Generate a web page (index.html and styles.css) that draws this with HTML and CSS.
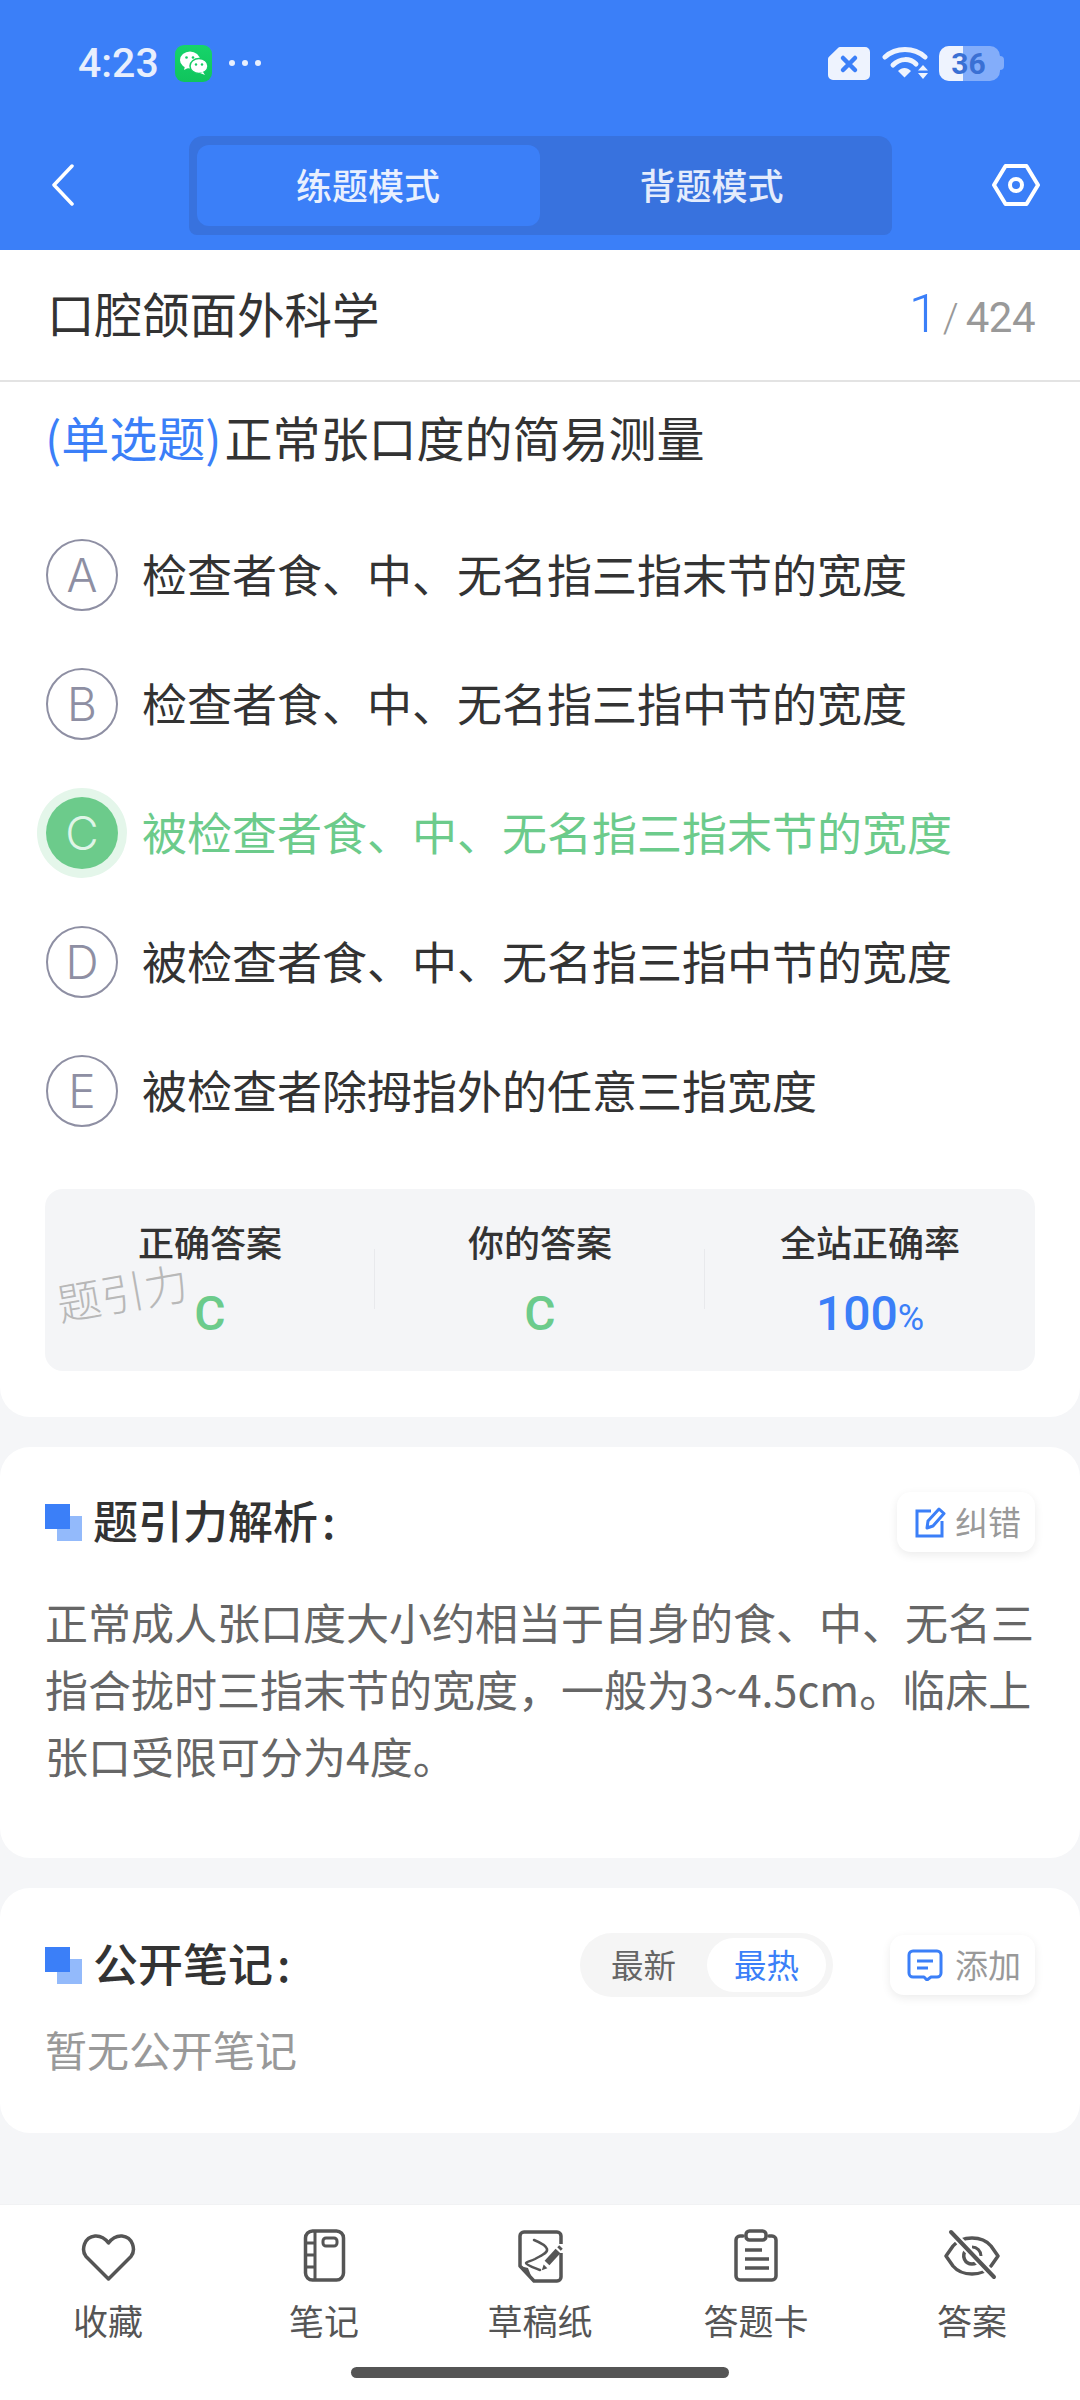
FILE: index.html
```html
<!DOCTYPE html>
<html lang="zh">
<head>
<meta charset="utf-8">
<title>练题模式</title>
<link rel="stylesheet" href="styles.css">
</head>
<body>
<div class="page">
  <header class="header">
    <div class="status">
      <div class="status-left">
        <span class="time">4:23</span>
        <svg class="wechat" viewBox="0 0 37 37"><defs><linearGradient id="wg" x1="0" y1="0" x2="0" y2="1"><stop offset="0" stop-color="#16d46a"/><stop offset="1" stop-color="#10c45c"/></linearGradient></defs><rect width="37" height="37" rx="9" fill="url(#wg)"/><ellipse cx="15" cy="15" rx="10" ry="8.6" fill="#fff"/><path d="M10 21l-1 4 5-2.500z" fill="#fff"/><ellipse cx="24" cy="21" rx="9" ry="7.400" fill="#fff" stroke="#14cc64" stroke-width="1.500"/><path d="M28 27l2 3-5-2z" fill="#fff"/><circle cx="11.500" cy="12.500" r="1.300" fill="#14cc64"/><circle cx="18" cy="12.500" r="1.300" fill="#14cc64"/><circle cx="21" cy="19.500" r="1.200" fill="#14cc64"/><circle cx="27" cy="19.500" r="1.200" fill="#14cc64"/></svg>
        <svg class="dots" viewBox="0 0 34 8"><circle cx="4" cy="4" r="3" fill="#e8effd"/><circle cx="17" cy="4" r="3" fill="#e8effd"/><circle cx="30" cy="4" r="3" fill="#e8effd"/></svg>
      </div>
      <div class="status-right">
        <svg class="sim" viewBox="0 0 44 35"><path d="M13 1H38a5 5 0 0 1 5 5V29a5 5 0 0 1-5 5H6a5 5 0 0 1-5-5V13a3 3 0 0 1 1-2.200L11 2a3 3 0 0 1 2-1z" fill="#eef3fe"/><path d="M16 12l12 12M28 12L16 24" stroke="#3b7ff8" stroke-width="4.500" stroke-linecap="round"/></svg>
        <svg class="wifi" viewBox="0 0 46 34"><path d="M3 11C14 1 32 1 43 11" fill="none" stroke="#eef3fe" stroke-width="5" stroke-linecap="round"/><path d="M11 19C18 12 28 12 34 18" fill="none" stroke="#eef3fe" stroke-width="5" stroke-linecap="round"/><path d="M16 25c4-4 9-4 13 0l-6.500 6.500z" fill="#eef3fe"/><path d="M42 19l5 5.500H37zM37 27h10l-5 6z" fill="#eef3fe" transform="translate(-1 0)"/></svg>
        <div class="battery">
          <div class="batt-body">
            <span class="batt-fill"></span>
            <span class="batt-num">36</span>
          </div>
          <span class="batt-nub"></span>
        </div>
      </div>
    </div>
    <nav class="nav">
      <svg class="back" viewBox="0 0 24 42"><path d="M21 2L3 21l18 19" fill="none" stroke="#fff" stroke-width="3.500" stroke-linecap="round" stroke-linejoin="round"/></svg>
      <div class="tabs">
        <div class="tab tab-on">练题模式</div>
        <div class="tab">背题模式</div>
      </div>
      <svg class="hex" viewBox="0 0 48 44"><path d="M13.500 3h21L46 22 34.500 41h-21L2 22z" fill="none" stroke="#fff" stroke-width="4" stroke-linejoin="round"/><circle cx="24" cy="22" r="6" fill="none" stroke="#fff" stroke-width="4"/></svg>
    </nav>
  </header>

  <main class="main">
    <section class="card card-q">
      <div class="titlebar">
        <h1 class="subject">口腔颌面外科学</h1>
        <div class="count"><span class="count-cur">1</span><span class="count-sep">/</span><span class="count-all">424</span></div>
      </div>
      <p class="question"><span class="qtype">(单选题)</span><span class="qtext">正常张口度的简易测量</span></p>
      <ul class="options">
        <li class="option"><span class="letter">A</span><span class="opt-text">检查者食、中、无名指三指末节的宽度</span></li>
        <li class="option"><span class="letter">B</span><span class="opt-text">检查者食、中、无名指三指中节的宽度</span></li>
        <li class="option option-right"><span class="letter">C</span><span class="opt-text">被检查者食、中、无名指三指末节的宽度</span></li>
        <li class="option"><span class="letter">D</span><span class="opt-text">被检查者食、中、无名指三指中节的宽度</span></li>
        <li class="option"><span class="letter">E</span><span class="opt-text">被检查者除拇指外的任意三指宽度</span></li>
      </ul>
      <div class="result">
        <div class="res-col"><div class="res-label">正确答案</div><div class="res-val green">C</div></div>
        <div class="res-col res-mid"><div class="res-label">你的答案</div><div class="res-val green">C</div></div>
        <div class="res-col"><div class="res-label">全站正确率</div><div class="res-val blue">100<small>%</small></div></div>
        <span class="watermark">题引力</span>
      </div>
    </section>

    <section class="card card-a">
      <div class="sec-head">
        <h2 class="sec-title"><span class="sec-mark"></span><span class="sec-text">题引力解析<span class="colon">:</span></span></h2>
        <div class="chip chip-fix">
          <svg class="chip-icon" viewBox="0 0 32 32"><path d="M17 5H3v25h25V15" fill="none" stroke="#3b7ff8" stroke-width="3"/><path d="M13 22l1-7L25 3l5 4.500L19 20z" fill="none" stroke="#3b7ff8" stroke-width="3" stroke-linejoin="round"/></svg>
          <span class="chip-text">纠错</span>
        </div>
      </div>
      <p class="explain">正常成人张口度大小约相当于自身的食、中、无名三指合拢时三指末节的宽度，一般为3~4.5cm。临床上张口受限可分为4度。</p>
    </section>

    <section class="card card-n">
      <div class="sec-head">
        <h2 class="sec-title"><span class="sec-mark"></span><span class="sec-text">公开笔记<span class="colon">:</span></span></h2>
        <div class="sec-tools">
          <div class="sort"><span class="sort-item">最新</span><span class="sort-item sort-on">最热</span></div>
          <div class="chip chip-add">
            <svg class="chip-icon" viewBox="0 0 36 32"><path d="M6 2h24a4 4 0 0 1 4 4v18a4 4 0 0 1-4 4h-6l-4 3-3-3H6a4 4 0 0 1-4-4V6a4 4 0 0 1 4-4z" fill="none" stroke="#3b7ff8" stroke-width="3" stroke-linejoin="round"/><path d="M10 12h16M10 19h11" stroke="#3b7ff8" stroke-width="3"/></svg>
            <span class="chip-text">添加</span>
          </div>
        </div>
      </div>
      <p class="empty">暂无公开笔记</p>
    </section>
  </main>

  <footer class="bottom">
    <div class="tools">
      <div class="tool">
        <svg class="tool-icon" viewBox="0 0 56 56"><path d="M28.500 51L6 28.500C1 22 4 9 15 8c6.500-.5 10.500 3 13.500 7 3-4 7-7.500 13.500-7 11 1 14 14 9 20.500z" fill="none" stroke="#555" stroke-width="3.500" stroke-linejoin="round"/></svg>
        <span>收藏</span>
      </div>
      <div class="tool">
        <svg class="tool-icon" viewBox="0 0 56 56"><rect x="9.500" y="3" width="38" height="49" rx="7" fill="none" stroke="#555" stroke-width="3.500"/><path d="M19 3v49M10 15h9M10 27h9M10 39h9" stroke="#555" stroke-width="3" fill="none"/><rect x="27" y="10" width="14" height="8" rx="3" fill="none" stroke="#555" stroke-width="3"/></svg>
        <span>笔记</span>
      </div>
      <div class="tool">
        <svg class="tool-icon" viewBox="0 0 56 56"><path d="M49 16V8a4 4 0 0 0-4-4H12a4 4 0 0 0-4 4v30l14 15h23a4 4 0 0 0 4-4V25" fill="none" stroke="#555" stroke-width="3.500" stroke-linejoin="round"/><path d="M8 38l8 2 5 13z" fill="#555"/><path d="M22 12c5 2 12 6 13 9 1 4-5 6-12 10-4 2-9 3-9 4 0 2 9 5 14 7" fill="none" stroke="#555" stroke-width="2.500" stroke-linecap="round"/><path d="M35 35l11-12" stroke="#555" stroke-width="6.500"/><path d="M31 41l1-3 2 2z" fill="#555" stroke="#555" stroke-width="1.500"/><path d="M47 21l2-2" stroke="#555" stroke-width="5"/></svg>
        <span>草稿纸</span>
      </div>
      <div class="tool">
        <svg class="tool-icon" viewBox="0 0 56 56"><path d="M15 8h-3a4 4 0 0 0-4 4v36a4 4 0 0 0 4 4h32a4 4 0 0 0 4-4V12a4 4 0 0 0-4-4h-3" fill="none" stroke="#555" stroke-width="3.500" stroke-linecap="round"/><rect x="18" y="3" width="20" height="9" rx="3.500" fill="none" stroke="#555" stroke-width="3.500"/><path d="M17 22h17M17 31h24M17 40h24" stroke="#555" stroke-width="3.500"/></svg>
        <span>答题卡</span>
      </div>
      <div class="tool">
        <svg class="tool-icon" viewBox="0 0 56 56"><path d="M2 28L9 18c5-6 12-8 19-8s14 2 19 8l7 10-7 10c-5 6-12 8-19 8s-14-2-19-8z" fill="none" stroke="#555" stroke-width="3.500" stroke-linejoin="round"/><path d="M22 22c-5 6-1 14 6 14 3 0 5-1 6-3" fill="none" stroke="#555" stroke-width="3.500"/><path d="M28 19c5 0 9 4 9 9" fill="none" stroke="#555" stroke-width="3"/><path d="M9 6l41 43" stroke="#fff" stroke-width="8"/><path d="M7 4l43 45" stroke="#555" stroke-width="4" stroke-linecap="round"/></svg>
        <span>答案</span>
      </div>
    </div>
    <div class="home-wrap"><span class="home-bar"></span></div>
  </footer>
</div>
</body>
</html>
```

FILE: styles.css
```css
* { box-sizing: border-box; }
html, body { margin: 0; padding: 0; }
body {
  width: 1080px;
  height: 2400px;
  overflow: hidden;
  font-family: "Noto Sans CJK SC", "Noto Sans", sans-serif;
  color: #333;
  background: #f5f6f8;
}
h1, h2, p, ul { margin: 0; padding: 0; font-weight: 400; }
ul { list-style: none; }

.page { display: flex; flex-direction: column; height: 2400px; }

/* header */
.header { height: 250px; background: #3b7ff8; flex: none; }
.status {
  height: 136px;
  padding: 45px 76px 0 78px;
  display: flex;
  justify-content: space-between;
  align-items: flex-start;
}
.status-left { display: flex; align-items: center; gap: 16px; height: 36px; }
.status-right { display: flex; align-items: center; gap: 11px; height: 36px; }
.time {
  font-family: Roboto, sans-serif;
  font-size: 41px;
  font-weight: 500;
  line-height: 36px;
  color: #e8effd;
}
.wechat { width: 37px; height: 37px; display: block; }
.dots { width: 34px; height: 8px; display: block; }
.sim { width: 44px; height: 35px; display: block; }
.wifi { width: 46px; height: 34px; display: block; }
.battery { display: flex; align-items: center; }
.batt-body {
  position: relative;
  width: 61px;
  height: 35px;
  border-radius: 10px;
  background: #83adfa;
  overflow: hidden;
  text-align: center;
}
.batt-nub {
  width: 4px;
  height: 14px;
  border-radius: 0 4px 4px 0;
  background: #83adfa;
  display: block;
}
.batt-fill {
  position: absolute;
  left: 0; top: 0; bottom: 0;
  width: 24px;
  background: #eef3fe;
}
.batt-num {
  position: relative;
  font-family: Roboto, sans-serif;
  font-weight: 700;
  font-size: 30px;
  line-height: 35px;
  color: #3a70d4;
  display: block;
  margin-left: -2px;
}
.nav {
  display: grid;
  grid-template-columns: 1fr 703px 1fr;
  align-items: center;
  height: 99px;
}
.back { width: 24px; height: 42px; margin: 0 0 2px 51px; display: block; }
.tabs {
  height: 99px;
  padding: 9px 8px;
  background: #3872de;
  border-radius: 14px 14px 8px 8px;
  display: flex;
}
.tab {
  flex: 1;
  display: flex;
  align-items: center;
  justify-content: center;
  padding-bottom: 4px;
  font-size: 36px;
  font-weight: 500;
  color: #e9f0fe;
  border-radius: 12px;
}
.tab-on { flex: none; width: 343px; background: #3b7ff8; }
.tab:not(.tab-on) { color: #e4ecfc; }
.hex { width: 48px; height: 44px; justify-self: end; margin: 0 40px 2px 0; display: block; }

/* content */
.main {
  flex: 1;
  display: flex;
  flex-direction: column;
  gap: 30px;
}
.card { background: #fff; border-radius: 30px; }
.card-q { border-radius: 0 0 30px 30px; height: 1167px; }

.titlebar {
  height: 132px;
  padding: 0 45px 4px 47px;
  border-bottom: 2px solid #e3e3e3;
  display: flex;
  justify-content: space-between;
  align-items: center;
}
.subject { font-size: 47.500px; color: #333; line-height: 1; }
.count { display: flex; align-items: baseline; font-family: Roboto, sans-serif; color: #999; }
.count-cur { font-size: 54px; color: #3b7ff8; font-weight: 300; }
.count-sep { font-size: 40px; margin: 0 7px 0 4px; font-weight: 300; }
.count-all { font-size: 42px; font-weight: 400; letter-spacing: -0.500px; }

.question {
  height: 128px;
  padding: 22px 0 0 45px;
  font-size: 48px;
  line-height: 64px;
  display: flex;
  gap: 3px;
}
.qtype { color: #3b7ff8; }
.qtext { color: #333; }

.option {
  height: 129px;
  padding-left: 46px;
  display: flex;
  align-items: center;
  gap: 24px;
  font-size: 45px;
  color: #333;
}
.opt-text { padding-bottom: 3px; }
.letter {
  width: 72px;
  height: 72px;
  border: 2px solid #8e8fa3;
  border-radius: 50%;
  display: flex;
  align-items: center;
  justify-content: center;
  font-family: Inter, sans-serif;
  font-weight: 300;
  font-size: 46px;
  color: #8e8fa3;
  flex: none;
}
.option-right { color: #6ccb8b; }
.option-right .letter {
  border: 0;
  background: #6ccb8b;
  box-shadow: 0 0 0 9px #e4f6ea;
  color: #dff5e7;
}

.result {
  position: relative;
  margin: 34px 45px 0;
  height: 182px;
  border-radius: 18px;
  background: #f4f5f7;
  display: grid;
  grid-template-columns: repeat(3, 1fr);
}
.res-col { padding-top: 27px; text-align: center; position: relative; }
.res-mid::before,
.res-mid::after {
  content: "";
  position: absolute;
  top: 60px;
  height: 60px;
  width: 1px;
  background: #e8e9ec;
}
.res-mid::before { left: -1px; }
.res-mid::after { right: 0; }
.res-label { font-size: 36px; font-weight: 500; line-height: 50px; color: #333; }
.res-val {
  font-family: Roboto, sans-serif;
  font-size: 48px;
  font-weight: 500;
  line-height: 56px;
  margin-top: 20px;
}
.res-val small { font-size: 36px; font-weight: 400; }
.green { color: #6ccb8b; }
.blue { color: #3b7ff8; }
.watermark {
  position: absolute;
  left: 11px;
  top: 80px;
  font-size: 44px;
  line-height: 1;
  color: #b8b8b8;
  transform: rotate(-10deg);
  font-weight: 300;
}

.sec-head {
  display: flex;
  justify-content: space-between;
  align-items: center;
  padding: 0 45px;
}
.sec-title {
  display: flex;
  align-items: center;
  font-size: 45px;
  font-weight: 500;
  color: #333;
}
.sec-text { line-height: 56px; padding-bottom: 4px; }
.sec-mark {
  position: relative;
  width: 37px;
  height: 37px;
  margin-right: 11px;
  flex: none;
}
.sec-mark::before,
.sec-mark::after { content: ""; position: absolute; width: 25px; height: 25px; }
.sec-mark::before { right: 0; bottom: 0; background: #93bafb; }
.sec-mark::after { left: 0; top: 0; background: #3b7ff8; }
.colon { margin-left: 4px; }

.chip {
  display: flex;
  align-items: center;
  justify-content: center;
  gap: 9px;
  font-size: 33px;
  color: #999;
  background: #fff;
  border-radius: 14px;
  box-shadow: 0 3px 10px rgba(0, 0, 0, 0.08);
}
.chip-text { padding-bottom: 3px; }
.chip-fix { width: 138px; height: 60px; padding-left: 3px; }
.chip-add { width: 145px; height: 60px; gap: 12px; padding-left: 3px; }
.chip-icon { width: 32px; height: 32px; display: block; flex: none; }
.chip-add .chip-icon { width: 36px; }

.card-a { padding: 45px 0 68px; }
.explain {
  margin: 36px 45px 1px;
  font-size: 43px;
  line-height: 67px;
  color: #666;
}

.card-n { padding: 45px 0 52px; }
.sec-tools { display: flex; align-items: center; gap: 57px; }
.sort {
  width: 253px;
  height: 64px;
  padding: 5px 7px 5px 0;
  border-radius: 32px;
  background: #f5f5f5;
  display: flex;
  justify-content: space-between;
  align-items: center;
}
.sort-item {
  width: 119px;
  height: 54px;
  display: flex;
  align-items: center;
  justify-content: center;
  padding-bottom: 3px;
  font-size: 32.500px;
  color: #666;
  border-radius: 27px;
}
.sort-item:first-child { width: 127px; }
.sort-on { background: #fff; color: #3b7ff8; }
.empty {
  margin: 22px 45px 2px;
  font-size: 42px;
  line-height: 60px;
  color: #999;
}

/* bottom */
.bottom { flex: none; height: 196px; background: #fff; border-top: 1px solid #f1f2f4; }
.tools { display: grid; grid-template-columns: repeat(5, 1fr); padding-top: 23px; }
.tool {
  display: flex;
  flex-direction: column;
  align-items: center;
  font-size: 35px;
  color: #555;
  line-height: 48px;
  gap: 12px;
}
.tool-icon { width: 56px; height: 56px; display: block; }
.home-wrap { display: flex; justify-content: center; padding-top: 23px; }
.home-bar { width: 378px; height: 11px; border-radius: 6px; background: #555; display: block; }
```
